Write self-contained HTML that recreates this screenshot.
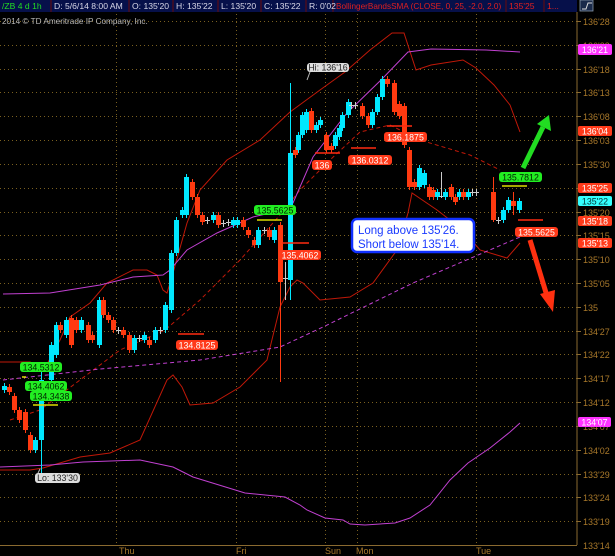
<!DOCTYPE html>
<html><head><meta charset="utf-8"><style>
html,body{margin:0;padding:0;background:#000;width:615px;height:556px;overflow:hidden}
svg{display:block}
text{font-family:"Liberation Sans",sans-serif}
</style></head><body>
<svg id="s" width="615" height="556" viewBox="0 0 615 556" xmlns="http://www.w3.org/2000/svg">
<rect width="615" height="556" fill="#000"/>
<!-- header -->
<rect x="0" y="0" width="577" height="12" fill="#06104a"/>
<g stroke="#6a0a0a" stroke-width="1">
<line x1="51" y1="0" x2="51" y2="12"/><line x1="129" y1="0" x2="129" y2="12"/><line x1="173" y1="0" x2="173" y2="12"/><line x1="218" y1="0" x2="218" y2="12"/><line x1="261" y1="0" x2="261" y2="12"/><line x1="306" y1="0" x2="306" y2="12"/><line x1="333" y1="0" x2="333" y2="12"/><line x1="506" y1="0" x2="506" y2="12"/><line x1="544" y1="0" x2="544" y2="12"/>
</g>
<g font-size="8.6" fill="#d8d8e8">
<text x="2" y="9" fill="#22dd22">/ZB 4 d 1h</text>
<text x="54" y="9">D: 5/6/14 8:00 AM</text>
<text x="132" y="9">O: 135'20</text>
<text x="176" y="9">H: 135'22</text>
<text x="221" y="9">L: 135'20</text>
<text x="264" y="9">C: 135'22</text>
<text x="309" y="9">R: 0'02</text>
<text x="336" y="9" fill="#e02020" font-size="8.2">BollingerBandsSMA (CLOSE, 0, 25, -2.0, 2.0)</text>
<text x="509" y="9" fill="#e02020">135'25</text>
<text x="547" y="9" fill="#e02020">1...</text>
</g>
<rect x="580" y="0" width="13" height="11" fill="#1a2a4a" stroke="#8899aa" stroke-width="0.8"/>
<path d="M582 9 L586 9 L588 3 L592 3" stroke="#ddd" fill="none" stroke-width="1"/>
<!-- grid -->
<g id="grid" stroke="#7a6020" stroke-width="1" stroke-dasharray="1,3"></g>
<line x1="577" y1="12" x2="577" y2="545" stroke="#8a6a30"/>
<line x1="0" y1="545.5" x2="577" y2="545.5" stroke="#8a6a30"/>
<g id="ax" font-size="9" fill="#a8782a"></g>
<g font-size="9" fill="#a8782a">
<text x="119" y="554">Thu</text><text x="236" y="554">Fri</text><text x="325" y="554">Sun</text><text x="356" y="554">Mon</text><text x="476" y="554">Tue</text>
</g>
<text x="2" y="24" font-size="8.2" fill="#b8b8b8">2014 © TD Ameritrade IP Company, Inc.</text>
<!-- lines -->
<g fill="none" stroke-width="1">
<polyline stroke="#c01808" points="0,362 30,362 45,368 60,340 70,317 90,303 107,283 133,270 147,270 157,275 163,290 167,293 173,273 187,223 200,190 227,160 260,140 290,112 320,90 345,72 370,50 392,33 404,33 416,70 431,65 463,60 476,68 494,85 510,105 520,132"/>
<polyline stroke="#c01808" points="0,470 30,470 43,468 80,457 110,453 140,440 167,380 173,375 182,387 190,405 213,403 240,387 267,360 280,307 290,287 297,280 303,283 320,300 350,297 373,283 397,250 408,213 412,193 437,210 463,230 480,250 507,258 520,243"/>
<polyline stroke="#c01808" stroke-dasharray="4,3" points="10,420 40,410 80,380 120,350 165,330 200,300 240,260 280,215 300,190 330,160 360,132 390,125 420,140 470,155 500,170"/>
<polyline stroke="#c040d0" points="3,294 50,293 100,285 133,277 163,275 170,270 187,250 217,233 253,217 283,210 293,203 313,157 347,113 382,79 408,52 431,49 486,50 520,52"/>
<polyline stroke="#c040d0" stroke-dasharray="4,3" points="3,380 100,369 200,360 280,347 323,327 413,283 520,237"/>
<polyline stroke="#c040d0" points="0,467 50,465 83,462 140,460 173,467 183,472 193,477 245,493 285,497 300,505 307,510 325,518 343,520 350,524 365,525 395,523 410,518 430,505 450,480 468,463 490,448 510,432 520,423"/>
</g>
<g id="c"></g>
<!-- level lines -->
<g stroke-width="1.5">
<line x1="22" y1="377" x2="26" y2="377" stroke="#dddd00"/>
<line x1="33" y1="405" x2="58" y2="405" stroke="#dddd00"/>
<line x1="257" y1="220" x2="282" y2="220" stroke="#dddd00"/>
<line x1="502" y1="186" x2="527" y2="186" stroke="#dddd00"/>
<line x1="178" y1="334" x2="204" y2="334" stroke="#ff2a10"/>
<line x1="282" y1="243" x2="309" y2="243" stroke="#ff2a10"/>
<line x1="315" y1="153" x2="340" y2="153" stroke="#ff2a10"/>
<line x1="351" y1="148" x2="376" y2="148" stroke="#ff2a10"/>
<line x1="387" y1="126" x2="412" y2="126" stroke="#ff2a10"/>
<line x1="518" y1="220" x2="543" y2="220" stroke="#ff2a10"/>
</g>
<!-- labels -->
<g font-size="8.8" text-anchor="middle">
<rect x="20" y="362" width="42" height="10" rx="3" fill="#22ee22"/><text x="41" y="370.5" fill="#002200">134.5312</text>
<rect x="25" y="381" width="42" height="10" rx="3" fill="#22ee22"/><text x="46" y="389.5" fill="#002200">134.4062</text>
<rect x="30" y="391" width="42" height="10" rx="3" fill="#22ee22"/><text x="51" y="399.5" fill="#002200">134.3438</text>
<rect x="254" y="205" width="42" height="10" rx="3" fill="#22ee22"/><text x="275" y="213.5" fill="#002200">135.5625</text>
<rect x="499" y="172" width="43" height="10" rx="3" fill="#22ee22"/><text x="520.5" y="180.5" fill="#002200">135.7812</text>
<rect x="176" y="340" width="42" height="10" rx="3" fill="#ff3a1a"/><text x="197" y="348.5" fill="#fff">134.8125</text>
<rect x="279" y="250" width="42" height="10" rx="3" fill="#ff3a1a"/><text x="300" y="258.5" fill="#fff">135.4062</text>
<rect x="312" y="160" width="20" height="10" rx="3" fill="#ff3a1a"/><text x="322" y="168.5" fill="#fff">136</text>
<rect x="348" y="155" width="44" height="10" rx="3" fill="#ff3a1a"/><text x="370" y="163.5" fill="#fff">136.0312</text>
<rect x="384" y="132" width="43" height="10" rx="3" fill="#ff3a1a"/><text x="405.5" y="140.5" fill="#fff">136.1875</text>
<rect x="515" y="227" width="43" height="10" rx="3" fill="#ff3a1a"/><text x="536.5" y="235.5" fill="#fff">135.5625</text>
<rect x="307" y="63" width="42" height="9" rx="3" fill="#ddd"/><text x="328" y="70.5" fill="#222">Hi: 136'16</text>
<rect x="35" y="473" width="45" height="10" rx="3" fill="#ddd"/><text x="57.5" y="481" fill="#222">Lo: 133'30</text>
</g>
<g stroke="#bbb" stroke-width="1"><line x1="310" y1="72" x2="307" y2="80"/><line x1="38" y1="473" x2="40" y2="469"/></g>
<!-- right axis tags -->
<g font-size="8.8" text-anchor="middle">
<rect x="578" y="44" width="34" height="11" rx="2" fill="#ff33ff"/><text x="595" y="53" fill="#fff">136'21</text>
<rect x="578" y="126" width="34" height="10" rx="2" fill="#ff3a1a"/><text x="595" y="134.5" fill="#fff">136'04</text>
<rect x="578" y="183" width="34" height="10" rx="2" fill="#ff3a1a"/><text x="595" y="191.5" fill="#fff">135'25</text>
<rect x="578" y="196" width="34" height="10" rx="2" fill="#33ffff"/><text x="595" y="204.5" fill="#003333">135'22</text>
<rect x="578" y="216" width="34" height="10" rx="2" fill="#ff3a1a"/><text x="595" y="224.5" fill="#fff">135'18</text>
<rect x="578" y="238" width="34" height="10" rx="2" fill="#ff3a1a"/><text x="595" y="246.5" fill="#fff">135'13</text>
<rect x="578" y="417" width="33" height="10" rx="2" fill="#ff33ff"/><text x="594.5" y="425.5" fill="#fff">134'07</text>
</g>
<!-- note box -->
<rect x="352" y="219" width="122" height="33" rx="5" fill="#fff" stroke="#1030ff" stroke-width="2.5"/>
<text x="358" y="234" font-size="11.5" fill="#1a3aff">Long above 135'26.</text>
<text x="358" y="248" font-size="11.5" fill="#1a3aff">Short below 135'14.</text>
<!-- arrows -->
<path d="M523 168 L543 127" stroke="#22dd22" stroke-width="5" fill="none"/>
<path d="M549 115 L537 124 L551 131 Z" fill="#22dd22"/>
<path d="M530 240 L547 296" stroke="#ff3010" stroke-width="5" fill="none"/>
<path d="M553 312 L540 294 L555 290 Z" fill="#ff3010"/>
</svg>
<script>
var NS="http://www.w3.org/2000/svg",g=document.getElementById('grid'),ax=document.getElementById('ax'),c=document.getElementById('c');
var labs=["136'28","136'23","136'18","136'13","136'08","136'03","135'30","135'25","135'20","135'15","135'10","135'05","135","134'27","134'22","134'17","134'12","134'07","134'02","133'29","133'24","133'19","133'14"];
function el(t,a,p){var e=document.createElementNS(NS,t);for(var k in a)e.setAttribute(k,a[k]);p.appendChild(e);return e;}
labs.forEach(function(l,i){var y=Math.round(21+i*23.82)+0.5;if(y<544){el('line',{x1:0,y1:y,x2:577,y2:y},g);el('line',{x1:577,y1:y,x2:581,y2:y,stroke:'#8a6a30','stroke-dasharray':'none'},g);}
var t=el('text',{x:583,y:y+3.5},ax);t.textContent=l;});
[116,236,325,357,476].forEach(function(x){el('line',{x1:x+.5,y1:14,x2:x+.5,y2:545},g);});
var C='#00e8ff',R='#ff3a10',W='#cccccc';
var d=[[4,386,390,C],[9,387,392,R],[14,396,410,R],[19,410,420,R],[25,412,430,R],[30,435,450,R],[35,440,450,C],[41,380,440,C,370,478],[51,345,380,C],[56,325,355,C],[60,325,330,R],[66,320,335,C],[71,318,345,R],[76,320,330,R],[81,320,330,C],[88,325,340,R],[92,335,340,R],[99,300,345,C],[103,300,315,R],[108,315,320,R],[113,320,330,R],[118,330,331,W],[123,330,335,R],[129,335,350,R],[134,338,350,C],[139,338,339,W],[144,335,340,C],[149,340,345,R],[155,330,340,C],[160,330,331,W],[165,305,330,C],[171,253,310,C],[176,220,253,C],[182,210,215,C],[186,177,215,C],[192,182,197,R],[197,197,215,R],[202,215,222,R],[207,220,221,W],[213,215,220,C],[218,215,225,R],[223,223,224,W],[228,222,223,W],[233,220,225,C],[237,220,225,C],[243,220,227,R],[248,230,235,R],[254,240,245,R],[258,230,245,C],[264,230,231,W],[269,230,237,R],[274,230,240,C],[280,225,282,R,222,382],[285,278,279,W,262,300],[290,153,280,C,83,300],[295,150,155,R],[298,135,150,C],[302,115,135,C],[306,112,130,C],[311,111,130,R],[316,125,130,C],[320,120,125,C],[326,135,150,R],[331,146,150,R],[335,135,146,C],[339,128,137,C],[342,115,128,C],[348,102,115,C],[351,105,106,W],[355,105,106,W],[362,106,116,R],[368,116,125,R],[372,112,125,C],[377,97,112,C],[382,79,97,C],[387,79,84,R],[394,83,112,R],[399,104,116,R],[404,106,145,R],[409,150,187,R],[414,182,187,R],[419,168,187,C],[424,173,185,C],[429,187,197,R],[433,190,197,R],[437,192,197,C],[441,196,197,W,172,198],[445,192,197,C],[451,187,197,R],[455,197,202,R],[459,192,197,C],[463,192,197,R],[468,192,197,C],[472,192,193,W],[476,192,193,W],[493,192,220,R,177,222],[498,220,221,W],[503,210,220,C],[508,200,210,C],[513,201,206,R,192,215],[519,201,210,C]];
d.forEach(function(a){var wt=a[4]||a[1]-3,wb=a[5]||a[2]+3;
el('line',{x1:a[0]+.5,y1:wt,x2:a[0]+.5,y2:wb,stroke:a[3]==W?W:a[3],'stroke-width':1},c);
el('rect',{x:a[0]-2,y:a[1],width:a[3]==W?5:5,height:Math.max(1,a[2]-a[1]),fill:a[3]},c);});
</script>
</body></html>
